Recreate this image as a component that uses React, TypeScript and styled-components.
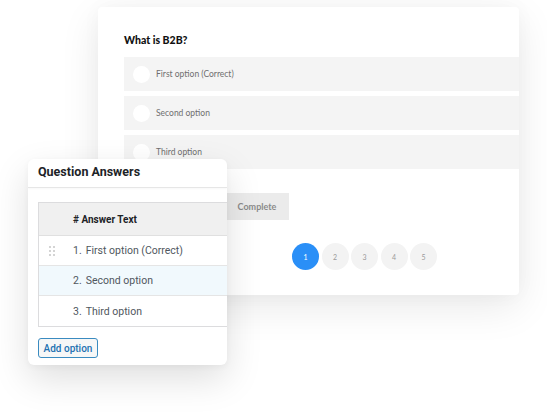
import React from "react";
import styled, { createGlobalStyle } from "styled-components";

const Global = createGlobalStyle`
  html, body { margin: 0; padding: 0; background: #ffffff; }
  * { box-sizing: border-box; }
`;

const Stage = styled.div`
  position: relative;
  width: 547px;
  height: 416px;
  overflow: hidden;
  background: #fff;
  padding: 7px 0 0 98px;
`;

const QuizCard = styled.div`
  width: 421px;
  height: 288px;
  background: #fff;
  border-radius: 4px;
  box-shadow: 0 12px 40px rgba(0, 0, 0, 0.09), 0 0 20px rgba(0, 0, 0, 0.03);
  overflow: hidden;
  padding: 26px 0 0 26px;
  display: flex;
  flex-direction: column;
  font-family: "Lato", "Open Sans", sans-serif;
`;

const Question = styled.div`
  font-size: 10.5px;
  font-weight: 900;
  color: #111;
  line-height: 14px;
  height: 14px;
  margin-bottom: 10px;
`;

const Options = styled.div`
  display: flex;
  flex-direction: column;
  gap: 5px;
`;

const OptionRow = styled.div`
  height: 34px;
  background: #f4f4f4;
  display: flex;
  align-items: center;
  padding-left: 9px;
  gap: 6px;
  font-size: 8.5px;
  color: #6f6f6f;
`;

const Radio = styled.span`
  width: 17px;
  height: 17px;
  border-radius: 50%;
  background: #fff;
  flex-shrink: 0;
`;

const ActionRow = styled.div`
  display: flex;
  margin-top: 24px;
  padding-left: 101px;
`;

const CompleteButton = styled.div`
  width: 64px;
  height: 27px;
  background: #ebebeb;
  color: #8a8a8a;
  font-size: 9px;
  font-weight: 700;
  display: flex;
  align-items: center;
  justify-content: center;
`;

const Pager = styled.div`
  display: flex;
  gap: 2.5px;
  margin-top: 23px;
  padding-left: 168px;
`;

const PageDot = styled.div<{ $active?: boolean }>`
  width: 27px;
  height: 27px;
  border-radius: 50%;
  background: ${(p) => (p.$active ? "#2a8ff7" : "#f3f3f3")};
  color: ${(p) => (p.$active ? "#fff" : "#9a9a9a")};
  font-size: 7px;
  display: flex;
  align-items: center;
  justify-content: center;
`;

const Panel = styled.div`
  position: absolute;
  left: 28px;
  top: 159px;
  width: 199px;
  height: 206px;
  background: #fff;
  border-radius: 6px;
  box-shadow: 0 14px 36px rgba(0, 0, 0, 0.13), 0 2px 6px rgba(0, 0, 0, 0.04);
  overflow: hidden;
  font-family: "Roboto", "Liberation Sans", Arial, sans-serif;
  display: flex;
  flex-direction: column;
`;

const PanelTitle = styled.div`
  height: 29px;
  padding: 0 0 4px 10px;
  font-size: 12.5px;
  font-weight: 700;
  color: #1d2327;
  border-bottom: 1px solid #e6e6e6;
  box-shadow: 0 1px 2px rgba(0, 0, 0, 0.03);
  display: flex;
  align-items: center;
`;

const PanelBody = styled.div`
  padding: 14px 0 0 10px;
  display: flex;
  flex-direction: column;
`;

const Table = styled.div`
  width: 230px;
  border: 1px solid #dcdcde;
  display: flex;
  flex-direction: column;
`;

const HeadRow = styled.div`
  height: 33px;
  background: #f0f0f0;
  border-bottom: 1px solid #e0e0e0;
  display: flex;
  align-items: center;
  padding-left: 34px;
  font-size: 10px;
  font-weight: 700;
  color: #1d2327;
`;

const Row = styled.div<{ $highlight?: boolean }>`
  height: 30px;
  background: ${(p) => (p.$highlight ? "#f1f9fd" : "#fff")};
  border-bottom: 1px solid #e5e5e5;
  display: flex;
  align-items: center;
  font-size: 10.5px;
  color: #50575e;
  &:last-child { border-bottom: none; }
`;

const HandleCell = styled.div`
  width: 34px;
  display: flex;
  justify-content: center;
  padding-right: 8px;
`;

const RowNumber = styled.span`
  margin-right: 4px;
`;

const AddButton = styled.div`
  margin-top: 11px;
  width: 60px;
  height: 20px;
  border: 1px solid #3a8bc0;
  border-radius: 3px;
  background: #f6f7f7;
  color: #2271b1;
  font-size: 10px;
  font-weight: 500;
  display: flex;
  align-items: center;
  justify-content: center;
`;

const Handle = () => (
  <svg width="6" height="10" viewBox="0 0 6 10">
    {[0, 4, 8].map((y) =>
      [0, 4].map((x) => (
        <rect key={`${x}-${y}`} x={x} y={y} width="2" height="2" fill="#d4d4d4" />
      ))
    )}
  </svg>
);

const options = ["First option (Correct)", "Second option", "Third option"];

export default function App() {
  return (
    <>
      <Global />
      <Stage>
        <QuizCard>
          <Question>What is B2B?</Question>
          <Options>
            {options.map((o) => (
              <OptionRow key={o}>
                <Radio />
                {o}
              </OptionRow>
            ))}
          </Options>
          <ActionRow>
            <CompleteButton>Complete</CompleteButton>
          </ActionRow>
          <Pager>
            {[1, 2, 3, 4, 5].map((n) => (
              <PageDot key={n} $active={n === 1}>
                {n}
              </PageDot>
            ))}
          </Pager>
        </QuizCard>
        <Panel>
          <PanelTitle>Question Answers</PanelTitle>
          <PanelBody>
            <Table>
              <HeadRow># Answer Text</HeadRow>
              {options.map((o, i) => (
                <Row key={o} $highlight={i === 1}>
                  <HandleCell>{i === 0 ? <Handle /> : null}</HandleCell>
                  <RowNumber>{i + 1}.</RowNumber>
                  {o}
                </Row>
              ))}
            </Table>
            <AddButton>Add option</AddButton>
          </PanelBody>
        </Panel>
      </Stage>
    </>
  );
}
